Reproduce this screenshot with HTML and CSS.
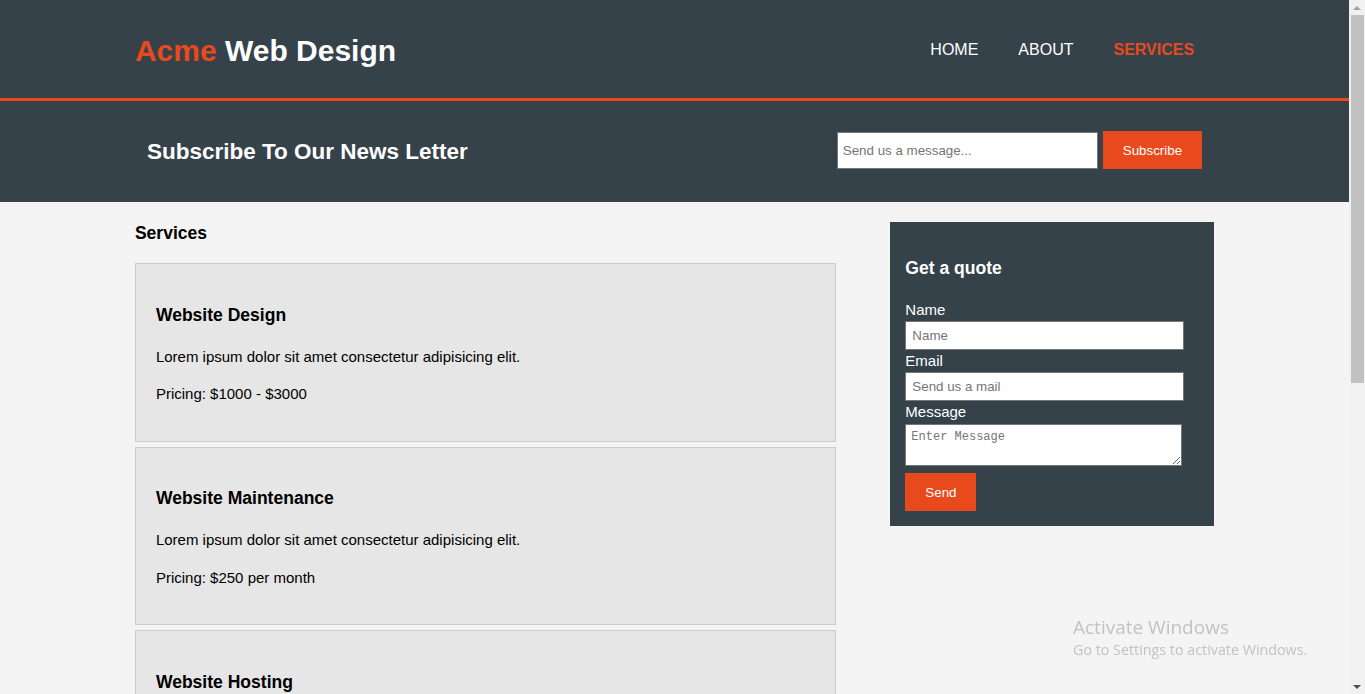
FILE: index.html
```html
<!DOCTYPE html>
<html lang="en">
<head>
<meta charset="utf-8">
<title>Acme Web Design | Services</title>
<link rel="stylesheet" href="styles.css">
</head>
<body>
<header class="site-header">
  <div class="container header-inner">
    <div class="branding">
      <h1 class="logo"><span class="highlight">Acme</span> Web Design</h1>
    </div>
    <nav class="main-nav">
      <ul class="nav-list">
        <li class="nav-item"><a class="nav-link" href="#">Home</a></li>
        <li class="nav-item"><a class="nav-link" href="#">About</a></li>
        <li class="nav-item nav-item-current"><a class="nav-link" href="#">Services</a></li>
      </ul>
    </nav>
  </div>
</header>

<section class="newsletter">
  <div class="container newsletter-inner">
    <h1 class="newsletter-title">Subscribe To Our News Letter</h1>
    <form class="newsletter-form">
      <input class="newsletter-input" type="email" placeholder="Send us a message...">
      <button class="btn" type="submit">Subscribe</button>
    </form>
  </div>
</section>

<section class="main">
  <div class="container main-inner">
    <article class="services">
      <h3 class="page-title">Services</h3>
      <ul class="service-list">
        <li class="service">
          <h3 class="service-title">Website Design</h3>
          <p class="service-text">Lorem ipsum dolor sit amet consectetur adipisicing elit.</p>
          <p class="service-text">Pricing: $1000 - $3000</p>
        </li>
        <li class="service">
          <h3 class="service-title">Website Maintenance</h3>
          <p class="service-text">Lorem ipsum dolor sit amet consectetur adipisicing elit.</p>
          <p class="service-text">Pricing: $250 per month</p>
        </li>
        <li class="service">
          <h3 class="service-title">Website Hosting</h3>
          <p class="service-text">Lorem ipsum dolor sit amet consectetur adipisicing elit.</p>
          <p class="service-text">Pricing: $500 per month</p>
        </li>
      </ul>
    </article>

    <aside class="sidebar">
      <div class="quote-box">
        <h3 class="quote-title">Get a quote</h3>
        <form class="quote-form">
          <label class="field-label">Name</label>
          <input class="field-input" type="text" placeholder="Name">
          <label class="field-label">Email</label>
          <input class="field-input" type="email" placeholder="Send us a mail">
          <label class="field-label">Message</label>
          <textarea class="field-textarea" placeholder="Enter Message"></textarea>
          <button class="btn btn-send" type="submit">Send</button>
        </form>
      </div>
    </aside>
  </div>
</section>

<footer class="site-footer">
  <p class="footer-text">Acme Web Design, Copyright &copy; 2017</p>
</footer>

<div class="activate-overlay">
  <div class="activate-title">Activate Windows</div>
  <div class="activate-sub">Go to Settings to activate Windows.</div>
</div>

<div class="fake-scrollbar" aria-hidden="true">
  <div class="sb-button"><span class="sb-arrow sb-arrow-up"></span></div>
  <div class="sb-track"><div class="sb-thumb"></div></div>
  <div class="sb-button"><span class="sb-arrow sb-arrow-down"></span></div>
</div>
</body>
</html>
```

FILE: styles.css
```css
body {
  margin: 0 16px 0 0;
  padding: 0;
  font: 15px/1.5 "Liberation Sans", Arial, Helvetica, sans-serif;
  background: #f4f4f4;
  color: #000;
}

.container {
  width: 80%;
  margin: 0 auto;
}

/* Header */
.site-header {
  background: #35424a;
  color: #fff;
  padding-top: 28px;
  height: 70px;
  border-bottom: 3px solid #e8491d;
}
.header-inner {
  display: flex;
  justify-content: space-between;
  align-items: flex-start;
}
.logo {
  margin: 0;
  font-size: 30px;
  line-height: 45px;
  font-weight: bold;
}
.highlight {
  color: #e8491d;
}
.main-nav {
  margin-top: 10px;
}
.nav-list {
  display: flex;
  list-style: none;
  margin: 0;
  padding: 0;
}
.nav-item {
  padding: 0 20px;
  line-height: 24px;
}
.nav-link {
  color: #fff;
  text-decoration: none;
  text-transform: uppercase;
  font-size: 16px;
}
.nav-item-current .nav-link {
  color: #e8491d;
  font-weight: bold;
}

/* Newsletter */
.newsletter {
  background: #35424a;
  color: #fff;
  padding: 15px;
}
.newsletter-inner {
  display: flex;
  justify-content: space-between;
  align-items: flex-start;
  min-height: 71px;
}
.newsletter-title {
  margin: 19px 0 0;
  font-size: 22.5px;
  line-height: 34px;
  font-weight: bold;
}
.newsletter-form {
  margin-top: 15px;
  display: flex;
  align-items: center;
  gap: 5px;
}
.newsletter-input {
  box-sizing: border-box;
  width: 261px;
  height: 37px;
  padding: 4px 5px;
  border: 1px solid #767676;
  background: #fff;
  font: 13.33px "Liberation Sans", Arial, sans-serif;
  color: #000;
}
.newsletter-input::placeholder,
.field-input::placeholder,
.field-textarea::placeholder {
  color: #757575;
}
.btn {
  height: 38px;
  background: #e8491d;
  border: 0;
  padding: 0 20px;
  color: #fff;
  font: 13.33px "Liberation Sans", Arial, sans-serif;
  cursor: pointer;
}

/* Main */
.main {
  min-height: 967px;
}
.main-inner {
  display: flex;
  justify-content: space-between;
  align-items: flex-start;
}
.services {
  width: 65%;
}
.page-title {
  font-size: 17.55px;
  line-height: 26.33px;
  margin: 17.55px 0;
  font-weight: bold;
}
.service-list {
  list-style: none;
  margin: 0;
  padding: 0;
}
.service {
  padding: 20px;
  border: 1px solid #cccccc;
  margin-bottom: 5px;
  background: #e6e6e6;
}
.service-title {
  font-size: 17.55px;
  line-height: 26.33px;
  margin: 17.55px 0;
  font-weight: bold;
}
.service-text {
  margin: 15px 0;
}

/* Sidebar */
.sidebar {
  width: 30%;
  margin-top: 10px;
}
.quote-box {
  background: #35424a;
  color: #fff;
  padding: 15px;
  margin-top: 10px;
}
.quote-title {
  font-size: 17.55px;
  line-height: 26.33px;
  margin: 17.55px 0 18.5px;
  font-weight: bold;
}
.quote-form {
  margin: 0;
}
.field-label {
  display: block;
  line-height: 22px;
}
.field-input {
  display: block;
  box-sizing: border-box;
  width: 279px;
  height: 29px;
  padding: 5px 6px;
  border: 1px solid #767676;
  background: #fff;
  font: 13.33px "Liberation Sans", Arial, sans-serif;
  color: #000;
}
.field-textarea {
  display: block;
  box-sizing: border-box;
  width: 277px;
  height: 42px;
  margin-top: 1px;
  padding: 5px;
  border: 1px solid #767676;
  background: #fff;
  font: 12px/15px "Liberation Mono", "DejaVu Sans Mono", monospace;
  color: #000;
}
.btn-send {
  display: block;
  margin-top: 7px;
}

/* Footer */
.site-footer {
  margin-top: 20px;
  padding: 20px;
  background: #e8491d;
  color: #fff;
  text-align: center;
}
.footer-text {
  margin: 0;
}

/* Windows activation watermark (overlay) */
.activate-overlay {
  position: fixed;
  left: 1073px;
  top: 614px;
  font-family: "Open Sans", "Noto Sans", sans-serif;
  color: #c2c2c2;
  pointer-events: none;
}
.activate-title {
  font-size: 19px;
  line-height: 26px;
}
.activate-sub {
  font-size: 14.3px;
  line-height: 19px;
}

/* Browser scrollbar drawn as an overlay at the window edge */
.fake-scrollbar {
  position: fixed;
  top: 0;
  right: 0;
  width: 16px;
  height: 100vh;
  background: #f1f1f1;
  display: flex;
  flex-direction: column;
}
.sb-button {
  height: 15px;
  flex: none;
  display: flex;
  align-items: center;
  justify-content: center;
}
.sb-track {
  flex: 1;
  padding: 0 1px 0 2px;
}
.sb-thumb {
  height: 368px;
  background: #c1c1c1;
}
.sb-arrow {
  width: 0;
  height: 0;
  border-left: 4px solid transparent;
  border-right: 4px solid transparent;
}
.sb-arrow-up {
  border-bottom: 4px solid #a3a3a3;
}
.sb-arrow-down {
  border-top: 4px solid #505050;
}
```
